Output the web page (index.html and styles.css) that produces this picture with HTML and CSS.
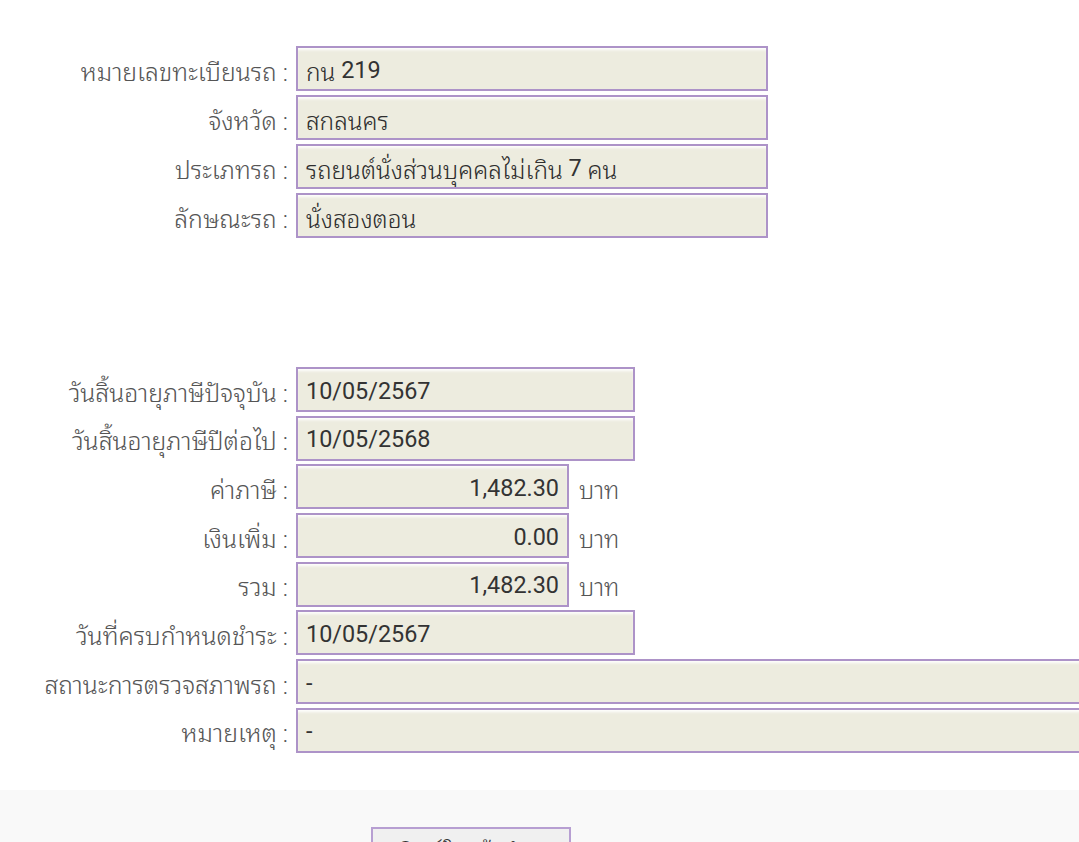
FILE: index.html
```html
<!DOCTYPE html>
<html lang="th">
<head>
<meta charset="utf-8">
<link rel="stylesheet" href="styles.css">
</head>
<body>
<div class="page">
  <div class="group group-top">
    <div class="row"><div class="label">หมายเลขทะเบียนรถ :</div><div class="field w-lg"><span class="th">กน</span>&nbsp;219</div></div>
    <div class="row"><div class="label">จังหวัด :</div><div class="field w-lg"><span class="th">สกลนคร</span></div></div>
    <div class="row"><div class="label">ประเภทรถ :</div><div class="field w-lg"><span class="th">รถยนต์นั่งส่วนบุคคลไม่เกิน</span>&nbsp;7&nbsp;<span class="th">คน</span></div></div>
    <div class="row"><div class="label">ลักษณะรถ :</div><div class="field w-lg"><span class="th">นั่งสองตอน</span></div></div>
  </div>
  <div class="group group-bottom">
    <div class="row"><div class="label">วันสิ้นอายุภาษีปัจจุบัน :</div><div class="field w-md">10/05/2567</div></div>
    <div class="row"><div class="label">วันสิ้นอายุภาษีปีต่อไป :</div><div class="field w-md">10/05/2568</div></div>
    <div class="row"><div class="label">ค่าภาษี :</div><div class="field w-sm num">1,482.30</div><span class="unit">บาท</span></div>
    <div class="row"><div class="label">เงินเพิ่ม :</div><div class="field w-sm num">0.00</div><span class="unit">บาท</span></div>
    <div class="row"><div class="label">รวม :</div><div class="field w-sm num">1,482.30</div><span class="unit">บาท</span></div>
    <div class="row"><div class="label">วันที่ครบกำหนดชำระ :</div><div class="field w-md">10/05/2567</div></div>
    <div class="row"><div class="label">สถานะการตรวจสภาพรถ :</div><div class="field w-full">-</div></div>
    <div class="row"><div class="label">หมายเหตุ :</div><div class="field w-full">-</div></div>
  </div>
  <div class="footer">
    <button class="btn">พิมพ์ใบแจ้งชำระ</button>
  </div>
</div>
</body>
</html>
```

FILE: styles.css
```css
html, body {
  margin: 0;
  padding: 0;
  background: #ffffff;
  overflow: hidden;
}
body {
  font-family: Roboto, "Noto Sans Thai Looped", "Noto Sans", sans-serif;
  font-size: 23.4px;
  color: #333333;
}
.page {
  width: 1079px;
  height: 842px;
  display: flex;
  flex-direction: column;
}
.group {
  display: flex;
  flex-direction: column;
  gap: 4px;
}
.group-top {
  padding-top: 46px;
}
.group-bottom {
  padding-top: 129px;
  gap: 3.7px;
}
.row {
  display: flex;
  align-items: center;
  height: 45px;
}
.label {
  width: 288px;
  flex: none;
  text-align: right;
  color: #555555;
  margin-right: 8px;
  white-space: nowrap;
  padding-top: 2px;
  font-size: 24.8px;
  font-weight: 300;
}
.field {
  box-sizing: border-box;
  height: 45px;
  flex: none;
  border: 2px solid #ad93c8;
  background: #edecdf;
  box-shadow: inset 0 3px 3px -1px rgba(255, 255, 255, 0.95);
  padding: 2px 8px 0;
  display: flex;
  align-items: center;
  color: #333333;
  white-space: nowrap;
}
.th {
  font-size: 24.4px;
  font-weight: 300;
  color: #2e2e2e;
}
.w-lg { width: 472px; }
.w-md { width: 339px; }
.w-sm { width: 273px; }
.w-full { width: 800px; }
.num { justify-content: flex-end; }
.unit {
  margin-left: 10px;
  color: #555555;
  padding-top: 2px;
  font-size: 24px;
  font-weight: 300;
}
.footer {
  margin-top: 37px;
  flex: 1;
  background: #f9f9f9;
  padding-top: 37px;
  padding-left: 371px;
}
.btn {
  box-sizing: border-box;
  width: 200px;
  height: 45px;
  border: 2px solid #b79fd2;
  background: #f0f0f0;
  font-family: inherit;
  font-size: 23.4px;
  font-weight: 300;
  color: #333333;
  padding: 0;
}
```
